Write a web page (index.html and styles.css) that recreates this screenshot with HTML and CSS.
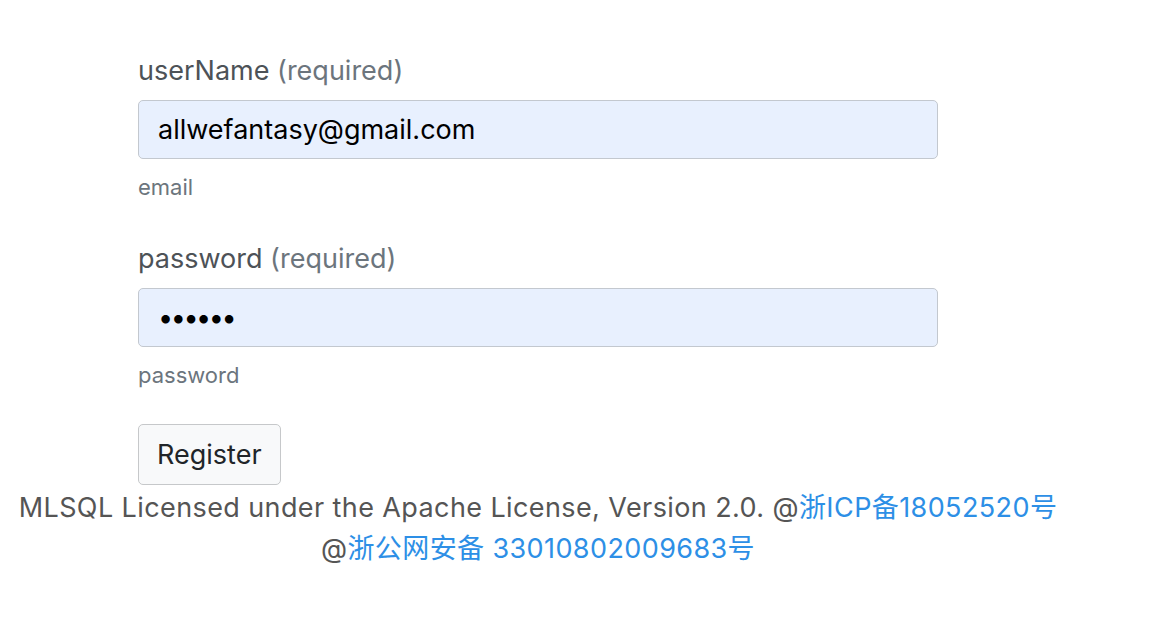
FILE: index.html
```html
<!DOCTYPE html>
<html lang="zh">
<head>
<meta charset="utf-8">
<title>Register</title>
<link rel="stylesheet" href="styles.css">
</head>
<body>
<main class="page">
  <form class="form">
    <div class="group">
      <label class="label">userName <span class="req">(required)</span></label>
      <input class="input" type="text" value="allwefantasy@gmail.com">
      <small class="help">email</small>
    </div>
    <div class="group">
      <label class="label">password <span class="req">(required)</span></label>
      <input class="input input-password" type="password" value="123456">
      <small class="help">password</small>
    </div>
    <button class="btn" type="button">Register</button>
  </form>
  <footer class="footer">
    <p class="line">MLSQL Licensed under the Apache License, Version 2.0. @<a class="link" href="#">浙ICP备18052520号</a></p>
    <p class="line">@<a class="link" href="#">浙公网安备 33010802009683号</a></p>
  </footer>
</main>
</body>
</html>
```

FILE: styles.css
```css
html, body {
  margin: 0;
  padding: 0;
  background: #ffffff;
}
body {
  font-family: Inter, "Liberation Sans", "Noto Sans CJK SC", sans-serif;
  color: #495057;
}
.page {
  width: 1076px;
  padding-top: 53px;
}
.form {
  margin-left: 138px;
  width: 800px;
}
.group {
  margin-bottom: 37px;
}
.group:last-of-type {
  margin-bottom: 32px;
}
.label {
  display: block;
  font-size: 27px;
  line-height: 36px;
  margin-bottom: 11px;
  color: #4d5257;
}
.req {
  color: #6c757d;
}
.input {
  display: block;
  box-sizing: border-box;
  width: 800px;
  height: 59px;
  padding: 0 19px;
  font-family: inherit;
  font-size: 27px;
  color: #000;
  background: #e8f0fe;
  border: 1.5px solid #c3c8cf;
  border-radius: 5px;
  outline: none;
}
.input-password {
  letter-spacing: -2.5px;
}
.help {
  display: block;
  margin-top: 12px;
  font-size: 22px;
  line-height: 33px;
  color: #6c757d;
}
.btn {
  display: block;
  box-sizing: border-box;
  height: 61px;
  padding: 0 18px;
  font-family: inherit;
  font-size: 27px;
  color: #212529;
  background: #f8f9fa;
  border: 1.5px solid #c6c8ca;
  border-radius: 5px;
}
.footer {
  text-align: center;
  padding-top: 2px;
}
.line {
  margin: 0;
  font-size: 27px;
  line-height: 41px;
  letter-spacing: 0.4px;
  color: #555;
}
.link {
  color: #2d8fe6;
  text-decoration: none;
}
```
